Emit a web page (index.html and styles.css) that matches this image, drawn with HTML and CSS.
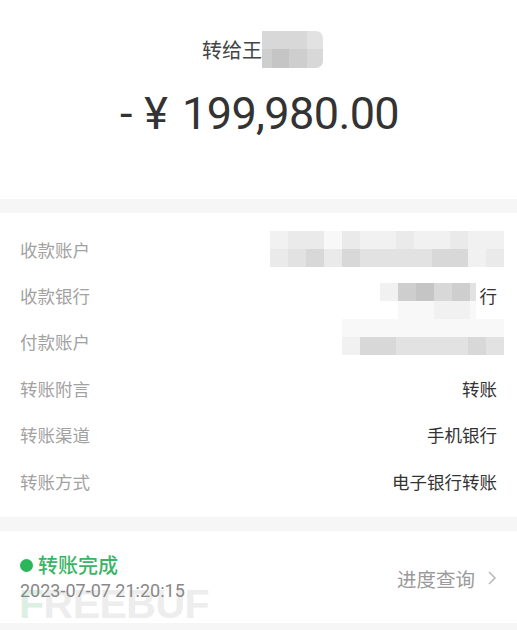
FILE: index.html
```html
<!DOCTYPE html>
<html>
<head>
  <title>转账详情</title>
  <meta charset="utf-8">
  <meta name="viewport" content="width=device-width, initial-scale=1">
  <link rel="stylesheet" href="styles.css">
</head>
<body>
  <!-- header -->
  <div class="summary">
    <div class="payee">
      <span>转给王</span>
      <span class="mosaic mosaic-name">
        <i class="s4"></i><i class="s4"></i><i class="s4"></i><i class="s3"></i>
        <i class="s5"></i><i class="s6"></i><i class="s5"></i><i class="s4"></i>
      </span>
    </div>
    <div class="amount">
      <span class="sign">-</span><span class="yen">¥</span><span class="num">199,980.00</span>
    </div>
  </div>

  <!-- details -->
  <ul class="details">
    <li>
      <span class="label">收款账户</span>
      <span class="mosaic mosaic-account">
        <i class="s1"></i><i class="s2"></i><i class="s2"></i><i class="s0"></i><i class="s2"></i><i class="s1"></i><i class="s1"></i><i class="s2"></i><i class="s1"></i><i class="s1"></i><i class="s2"></i><i class="s1"></i><i class="s1"></i>
        <i class="s2"></i><i class="s3"></i><i class="s4"></i><i class="s2"></i><i class="s4"></i><i class="s3"></i><i class="s3"></i><i class="s3"></i><i class="s3"></i><i class="s4"></i><i class="s4"></i><i class="s1"></i><i class="s2"></i>
      </span>
    </li>
    <li>
      <span class="label">收款银行</span>
      <span class="value">
        <span class="mosaic mosaic-bank">
          <i class="s1"></i><i class="s5"></i><i class="s6"></i><i class="s4"></i><i class="s5"></i><i class="s3"></i>
          <i class="w"></i><i class="s0"></i><i class="s0"></i><i class="s1"></i><i class="s1"></i><i class="s0"></i>
        </span>行
      </span>
    </li>
    <li>
      <span class="label">付款账户</span>
      <span class="mosaic mosaic-payer">
        <i class="s0"></i><i class="s0"></i><i class="s0"></i><i class="s0"></i><i class="s0"></i><i class="s0"></i><i class="s0"></i><i class="s0"></i><i class="s0"></i>
        <i class="s1"></i><i class="s4"></i><i class="s4"></i><i class="s3"></i><i class="s3"></i><i class="s3"></i><i class="s3"></i><i class="s4"></i><i class="s3"></i>
      </span>
    </li>
    <li>
      <span class="label">转账附言</span>
      <span class="value">转账</span>
    </li>
    <li>
      <span class="label">转账渠道</span>
      <span class="value">手机银行</span>
    </li>
    <li>
      <span class="label">转账方式</span>
      <span class="value">电子银行转账</span>
    </li>
  </ul>

  <!-- status -->
  <div class="status">
    <div class="watermark"><span class="wm-f">F</span>REEBUF</div>
    <div class="status-info">
      <div class="status-title"><span class="dot"></span>转账完成</div>
      <div class="status-time">2023-07-07 21:20:15</div>
    </div>
    <a class="progress">进度查询
      <svg width="10" height="16" viewBox="0 0 10 16"><polyline points="2,2 8,8 2,14" fill="none" stroke="#bbb" stroke-width="1.6"/></svg>
    </a>
  </div>
</body>
</html>
```

FILE: styles.css
```css
body {
  margin: 0;
  background-color: #f6f6f6;
  font-family: "Noto Sans CJK SC", "Noto Sans", sans-serif;
  color: #333;
}
.summary {
  height: 199px;
  padding-top: 31px;
  box-sizing: border-box;
  background: #fff;
  text-align: center;
}
.payee {
  display: flex;
  justify-content: center;
  align-items: center;
  padding-left: 8px;
  font-size: 20px;
  color: #444;
}
.amount {
  margin-top: 20px;
  line-height: 52px;
  font-family: Roboto, "Noto Sans", sans-serif;
  font-weight: 400;
  font-size: 45px;
  color: #333;
  padding-left: 2px;
}
.amount .sign {
  margin-right: 12px;
}
.amount .yen {
  margin-right: 14px;
}
.amount .num {
  letter-spacing: -0.6px;
}

/* pixelated blur blocks */
.mosaic {
  display: inline-grid;
  grid-auto-rows: 18px;
}
.mosaic i {
  display: block;
}
.mosaic .w  { background: #fff; }
.mosaic .s0 { background: #f8f8f8; }
.mosaic .s1 { background: #f1f1f1; }
.mosaic .s2 { background: #eaeaea; }
.mosaic .s3 { background: #e2e2e2; }
.mosaic .s4 { background: #d8d8d8; }
.mosaic .s5 { background: #cecece; }
.mosaic .s6 { background: #c5c5c5; }
.mosaic-name {
  grid-template-columns: 10px 17px 18px 16px;
  grid-auto-rows: 18px 19px;
  border-radius: 0 7px 7px 0;
  overflow: hidden;
}
.mosaic-account {
  grid-template-columns: repeat(13, 18px);
  margin-right: -7px;
}
.mosaic-bank {
  grid-template-columns: 18px 18px 18px 18px 18px 6px;
  margin-top: 10px;
  margin-right: 4px;
}
.mosaic-payer {
  grid-template-columns: repeat(9, 18px);
  margin-right: -7px;
  margin-top: -10px;
}

.details {
  list-style: none;
  margin: 14px 0;
  padding: 13px 20px;
  background: #fff;
}
.details li {
  display: flex;
  justify-content: space-between;
  align-items: center;
  height: 46.4px;
  font-size: 17.5px;
}
.label {
  color: #a2a2a2;
}
.value {
  display: flex;
  align-items: center;
  color: #333;
}

.status {
  position: relative;
  display: flex;
  justify-content: space-between;
  align-items: center;
  height: 92px;
  padding: 0 20px;
  box-sizing: border-box;
  background: #fff;
}
.status-info {
  position: relative;
  padding-top: 2px;
}
.status-title {
  display: flex;
  align-items: center;
  line-height: 26px;
  font-size: 20px;
  font-weight: 500;
  color: #3bb466;
}
.dot {
  width: 13px;
  height: 13px;
  margin-right: 5px;
  border-radius: 50%;
  background: #2cb65c;
}
.status-time {
  line-height: 26px;
  font-family: Roboto, "Noto Sans", sans-serif;
  font-size: 18px;
  color: #888;
}
.progress {
  display: flex;
  align-items: center;
  gap: 12px;
  margin-top: 2px;
  font-size: 19.5px;
  color: #9a9a9a;
}
/* faint site watermark lying over the timestamp */
.watermark {
  position: absolute;
  left: 19px;
  top: 55px;
  line-height: 36px;
  font-family: "Liberation Sans", sans-serif;
  font-weight: bold;
  font-size: 41px;
  letter-spacing: -0.5px;
  color: #ededed;
}
.wm-f {
  color: #dcefe2;
}
```
